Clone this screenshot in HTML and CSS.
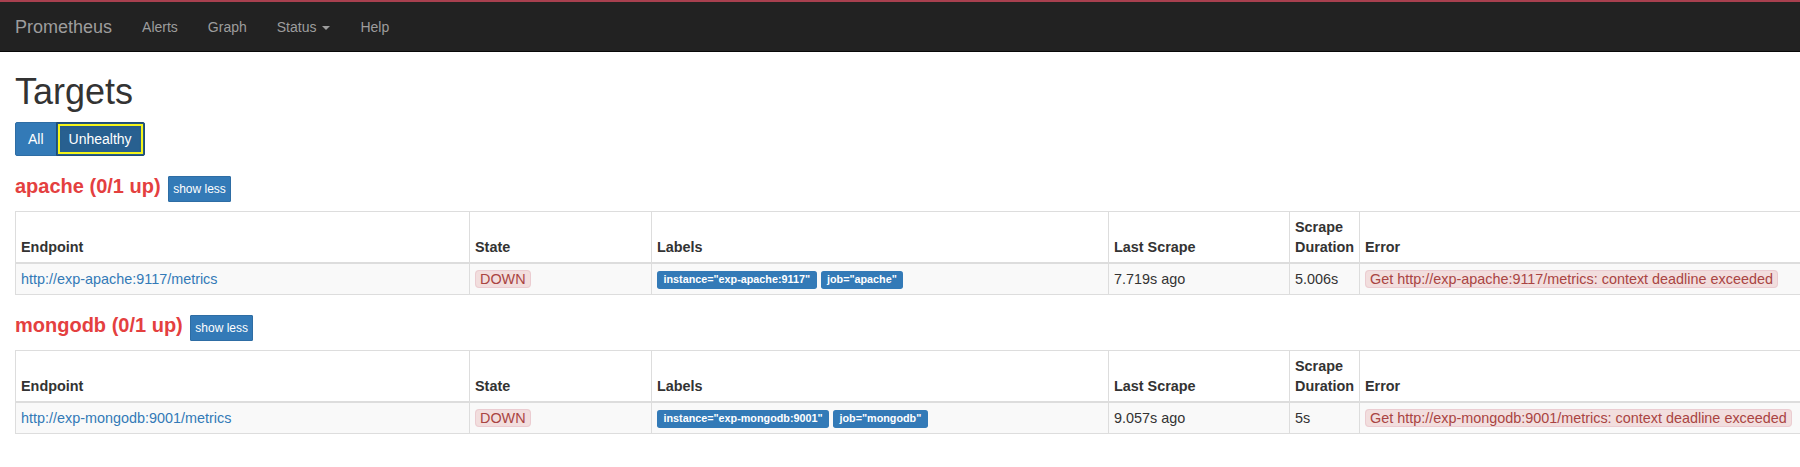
FILE: index.html
```html
<!DOCTYPE html>
<html lang="en">
<head>
<meta charset="utf-8">
<title>Prometheus Time Series Collection and Processing Server</title>
<link rel="stylesheet" href="styles.css">
</head>
<body>
<nav class="navbar">
  <a class="brand" href="#">Prometheus</a>
  <ul class="nav">
    <li><a href="#">Alerts</a></li>
    <li><a href="#">Graph</a></li>
    <li><a href="#">Status <span class="caret"></span></a></li>
    <li><a href="#">Help</a></li>
  </ul>
</nav>
<main class="container">
  <h1 class="title">Targets</h1>
  <div class="btn-group">
    <button class="btn btn-all" type="button">All</button><button class="btn btn-unhealthy" type="button">Unhealthy</button>
  </div>

  <section class="job">
    <h2 class="job-header"><a href="#job-apache">apache (0/1 up)</a> <button class="btn-xs" type="button">show less</button></h2>
    <table class="targets">
      <colgroup>
        <col class="c-endpoint"><col class="c-state"><col class="c-labels"><col class="c-last"><col class="c-dur"><col class="c-error">
      </colgroup>
      <thead>
        <tr><th>Endpoint</th><th>State</th><th>Labels</th><th>Last Scrape</th><th>Scrape Duration</th><th>Error</th></tr>
      </thead>
      <tbody>
        <tr>
          <td><a href="#">http://exp-apache:9117/metrics</a></td>
          <td><span class="state">DOWN</span></td>
          <td><span class="label">instance="exp-apache:9117"</span> <span class="label">job="apache"</span></td>
          <td>7.719s ago</td>
          <td>5.006s</td>
          <td><span class="state">Get http://exp-apache:9117/metrics: context deadline exceeded</span></td>
        </tr>
      </tbody>
    </table>
  </section>

  <section class="job">
    <h2 class="job-header"><a href="#job-mongodb">mongodb (0/1 up)</a> <button class="btn-xs" type="button">show less</button></h2>
    <table class="targets">
      <colgroup>
        <col class="c-endpoint"><col class="c-state"><col class="c-labels"><col class="c-last"><col class="c-dur"><col class="c-error">
      </colgroup>
      <thead>
        <tr><th>Endpoint</th><th>State</th><th>Labels</th><th>Last Scrape</th><th>Scrape Duration</th><th>Error</th></tr>
      </thead>
      <tbody>
        <tr>
          <td><a href="#">http://exp-mongodb:9001/metrics</a></td>
          <td><span class="state">DOWN</span></td>
          <td><span class="label">instance="exp-mongodb:9001"</span> <span class="label">job="mongodb"</span></td>
          <td>9.057s ago</td>
          <td>5s</td>
          <td><span class="state">Get http://exp-mongodb:9001/metrics: context deadline exceeded</span></td>
        </tr>
      </tbody>
    </table>
  </section>
</main>
</body>
</html>
```

FILE: styles.css
```css
html, body {
  overflow-x: hidden;
}
body {
  margin: 0;
  font-family: "Liberation Sans", Arial, Helvetica, sans-serif;
  font-size: 14px;
  line-height: 20px;
  color: #333;
  background: #fff;
}
a {
  color: #337ab7;
  text-decoration: none;
}

/* navbar */
.navbar {
  display: flex;
  align-items: center;
  height: 49px;
  background: #222;
  border-top: 2px solid #a8404f;
  border-bottom: 1px solid #080808;
}
.brand {
  padding: 0 15px;
  font-size: 18px;
  line-height: 20px;
  color: #9d9d9d;
}
.nav {
  display: flex;
  margin: 0;
  padding: 0;
  list-style: none;
}
.nav a {
  display: block;
  padding: 0 15px;
  line-height: 20px;
  color: #9d9d9d;
}
.caret {
  display: inline-block;
  width: 0;
  height: 0;
  margin-left: 2px;
  vertical-align: middle;
  border-top: 4px solid #9d9d9d;
  border-right: 4px solid transparent;
  border-left: 4px solid transparent;
}

/* content */
.container {
  padding: 0 15px;
}
.title {
  margin: 20px 0 10px;
  font-size: 36px;
  font-weight: 500;
  line-height: 1.1;
  color: #333;
}
.btn-group {
  display: flex;
  width: max-content;
}
.btn {
  margin: 0;
  padding: 6px 12px;
  font-family: inherit;
  font-size: 14px;
  line-height: 20px;
  color: #fff;
  border: 1px solid #2e6da4;
  background: #337ab7;
}
.btn-all {
  border-radius: 2px 0 0 2px;
}
.btn-unhealthy {
  margin-left: -1px;
  background: #286090;
  border-color: #204d74;
  border-radius: 0 2px 2px 0;
  box-shadow: inset 0 3px 5px rgba(0, 0, 0, .125);
  outline: 2px solid #f4f41a;
  outline-offset: -4px;
}

.job-header {
  margin: 20px 0 9px;
  font-size: 20px;
  font-weight: bold;
  line-height: 20px;
}
.job-header a {
  color: #e4403f;
}
.btn-xs {
  margin: 0 0 0 2px;
  padding: 3px 4px;
  font-family: inherit;
  font-size: 12px;
  line-height: 18px;
  font-weight: normal;
  color: #fff;
  background: #337ab7;
  border: 1px solid #2e6da4;
  border-radius: 1px;
  vertical-align: baseline;
}

.targets {
  width: 1799px;
  margin-bottom: 20px;
  table-layout: fixed;
  border-collapse: collapse;
  border: 1px solid #ddd;
  font-size: 14.4px;
}
.c-endpoint { width: 454px; }
.c-state { width: 182px; }
.c-labels { width: 457px; }
.c-last { width: 181px; }
.c-dur { width: 70px; }
.c-error { width: 455px; }
.targets th,
.targets td {
  padding: 5px;
  border: 1px solid #ddd;
  text-align: left;
  line-height: 20px;
}
.targets th {
  vertical-align: bottom;
  border-bottom: 2px solid #ddd;
  font-weight: bold;
}
.targets td {
  vertical-align: top;
  white-space: nowrap;
}
.targets tbody tr {
  background: #f9f9f9;
}
.state {
  padding: 0 4px;
  color: #a94442;
  background: #f2dede;
  border: 1px solid #ebccd1;
  border-radius: 4px;
}
.label {
  display: inline;
  padding: .2em .6em .3em;
  font-size: 75%;
  font-weight: bold;
  line-height: 1;
  color: #fff;
  text-align: center;
  white-space: nowrap;
  vertical-align: baseline;
  background: #337ab7;
  border-radius: .25em;
}
```
